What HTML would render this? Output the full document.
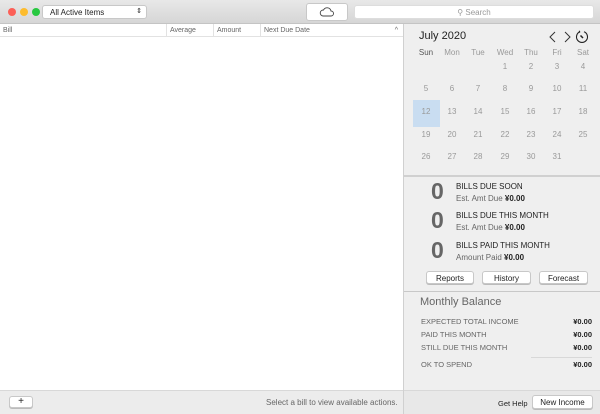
<!DOCTYPE html><html><head><style>
*{box-sizing:border-box;margin:0;padding:0}
body{width:600px;height:414px;overflow:hidden;font-family:"Liberation Sans",sans-serif;background:#ececec;position:relative;font-size:8px;color:#222}
.a{position:absolute}
.btn{position:absolute;background:#fff;border:1px solid #c8c8c8;border-radius:3px;text-align:center;font-size:8px;color:#222;box-shadow:0 1px 0 #bbb}
.cal span{position:absolute;width:26px;text-align:center;color:#999;font-size:8px}
.r{position:absolute;left:421px;right:8px;font-size:7.5px;color:#666}
.r b{position:absolute;right:0;color:#222}
</style></head><body>
<div class="a" style="left:0;top:0;width:600px;height:24px;background:linear-gradient(#e8e8e8,#d6d6d6);border-bottom:1px solid #c4c4c4"></div>
<div class="a" style="left:8px;top:8px;width:8px;height:8px;border-radius:50%;background:#fc5f57"></div>
<div class="a" style="left:20px;top:8px;width:8px;height:8px;border-radius:50%;background:#fdbc2e"></div>
<div class="a" style="left:32px;top:8px;width:8px;height:8px;border-radius:50%;background:#28c840"></div>
<div class="btn" style="left:42px;top:5px;width:105px;height:14px;text-align:left;padding:2px 0 0 7px;box-shadow:none">All Active Items<span style="position:absolute;right:4px;top:1px;font-size:7px">⇕</span></div>
<div class="btn" style="left:306px;top:3px;width:42px;height:18px;box-shadow:none"><svg width="16" height="12" viewBox="0 0 16 12" style="margin-top:2px"><path d="M4 10h8a2.5 2.5 0 0 0 0-5 4 4 0 0 0-7.5-1A3 3 0 0 0 4 10z" fill="none" stroke="#444" stroke-width="0.9"/></svg></div>
<div class="btn" style="left:354px;top:5px;width:240px;height:14px;box-shadow:none;color:#999;padding-top:2px;border-color:#ddd">⚲ Search</div>
<div class="a" style="left:0;top:24px;width:403px;height:366px;background:#fff"></div>
<div class="a" style="left:0;top:24px;width:403px;height:13px;border-bottom:1px solid #e2e2e2;font-size:7px;color:#666">
<span class="a" style="left:3px;top:3px">Bill</span>
<span class="a" style="left:166px;top:0;height:12px;border-left:1px solid #e2e2e2;padding:3px 0 0 3px">Average</span>
<span class="a" style="left:213px;top:0;height:12px;border-left:1px solid #e2e2e2;padding:3px 0 0 3px">Amount</span>
<span class="a" style="left:260px;top:0;height:12px;border-left:1px solid #e2e2e2;padding:3px 0 0 3px;width:143px">Next Due Date<span style="position:absolute;right:5px">^</span></span>
</div>
<div class="a" style="left:403px;top:24px;width:1px;height:390px;background:#d0d0d0"></div>
<div class="a" style="left:404px;top:24px;width:196px;height:366px;background:#efefef"></div>
<div class="a" style="left:0;top:390px;width:403px;height:24px;background:#ececec;border-top:1px solid #d8d8d8"></div>
<div class="btn" style="left:9px;top:396px;width:24px;height:12px;font-size:10px;line-height:10px">+</div>
<div class="a" style="left:266px;top:398px;font-size:8px;color:#666">Select a bill to view available actions.</div>
<div class="a" style="left:419px;top:30px;font-size:11px;color:#222">July 2020</div>
<svg class="a" style="left:548px;top:31px" width="26" height="12" viewBox="0 0 26 12"><path d="M7 1L2 6l5 5M17 1l5 5-5 5" fill="none" stroke="#333" stroke-width="1"/></svg>
<svg class="a" style="left:575px;top:30px" width="14" height="14" viewBox="0 0 14 14"><path d="M5 1.8A5.5 5.5 0 1 0 9 1.8" fill="none" stroke="#222" stroke-width="1.1"/><path d="M5 1.8l-1-1M5 1.8l-1.3.8" stroke="#222" stroke-width="1"/><path d="M5.5 5.5l2.5 2.5" stroke="#222" stroke-width="1.5"/></svg>
<div class="a" style="left:413px;top:100px;width:27px;height:27px;background:#c9ddf1"></div>
<div class="cal">
<span style="left:413px;top:48px;color:#555">Sun</span><span style="left:439px;top:48px">Mon</span><span style="left:465px;top:48px">Tue</span><span style="left:492px;top:48px">Wed</span><span style="left:518px;top:48px">Thu</span><span style="left:544px;top:48px">Fri</span><span style="left:570px;top:48px">Sat</span>
<span style="left:492px;top:62px">1</span><span style="left:518px;top:62px">2</span><span style="left:544px;top:62px">3</span><span style="left:570px;top:62px">4</span>
<span style="left:413px;top:84px">5</span><span style="left:439px;top:84px">6</span><span style="left:465px;top:84px">7</span><span style="left:492px;top:84px">8</span><span style="left:518px;top:84px">9</span><span style="left:544px;top:84px">10</span><span style="left:570px;top:84px">11</span>
<span style="left:413px;top:107px">12</span><span style="left:439px;top:107px">13</span><span style="left:465px;top:107px">14</span><span style="left:492px;top:107px">15</span><span style="left:518px;top:107px">16</span><span style="left:544px;top:107px">17</span><span style="left:570px;top:107px">18</span>
<span style="left:413px;top:130px">19</span><span style="left:439px;top:130px">20</span><span style="left:465px;top:130px">21</span><span style="left:492px;top:130px">22</span><span style="left:518px;top:130px">23</span><span style="left:544px;top:130px">24</span><span style="left:570px;top:130px">25</span>
<span style="left:413px;top:152px">26</span><span style="left:439px;top:152px">27</span><span style="left:465px;top:152px">28</span><span style="left:492px;top:152px">29</span><span style="left:518px;top:152px">30</span><span style="left:544px;top:152px">31</span>
</div>
<div class="a" style="left:404px;top:175px;width:196px;height:2px;background:#d0d0d0"></div>
<div class="a" style="left:431px;top:178px;font-size:23px;font-weight:bold;color:#666">0</div>
<div class="a" style="left:456px;top:182px;font-size:8px">BILLS DUE SOON</div>
<div class="a" style="left:456px;top:194px;font-size:8px;color:#666">Est. Amt Due <b style="color:#222">¥0.00</b></div>
<div class="a" style="left:431px;top:207px;font-size:23px;font-weight:bold;color:#666">0</div>
<div class="a" style="left:456px;top:211px;font-size:8px">BILLS DUE THIS MONTH</div>
<div class="a" style="left:456px;top:223px;font-size:8px;color:#666">Est. Amt Due <b style="color:#222">¥0.00</b></div>
<div class="a" style="left:431px;top:237px;font-size:23px;font-weight:bold;color:#666">0</div>
<div class="a" style="left:456px;top:241px;font-size:8px">BILLS PAID THIS MONTH</div>
<div class="a" style="left:456px;top:253px;font-size:8px;color:#666">Amount Paid <b style="color:#222">¥0.00</b></div>
<div class="btn" style="left:426px;top:271px;width:48px;height:13px;padding-top:2px">Reports</div>
<div class="btn" style="left:482px;top:271px;width:49px;height:13px;padding-top:2px">History</div>
<div class="btn" style="left:539px;top:271px;width:49px;height:13px;padding-top:2px">Forecast</div>
<div class="a" style="left:404px;top:291px;width:196px;height:1px;background:#c8c8c8"></div>
<div class="a" style="left:420px;top:296px;font-size:11px;color:#666">Monthly Balance</div>
<div class="r" style="top:317px">EXPECTED TOTAL INCOME<b>¥0.00</b></div>
<div class="r" style="top:330px">PAID THIS MONTH<b>¥0.00</b></div>
<div class="r" style="top:343px">STILL DUE THIS MONTH<b>¥0.00</b></div>
<div class="a" style="left:531px;top:357px;width:61px;height:1px;background:#d8d8d8"></div>
<div class="r" style="top:360px">OK TO SPEND<b>¥0.00</b></div>
<div class="a" style="left:404px;top:390px;width:196px;height:24px;background:#e8e8e8;border-top:1px solid #d8d8d8"></div>
<div class="a" style="left:498px;top:399px;font-size:7.5px">Get Help</div>
<div class="btn" style="left:532px;top:395px;width:61px;height:14px;padding-top:2px">New Income</div>
</body></html>
